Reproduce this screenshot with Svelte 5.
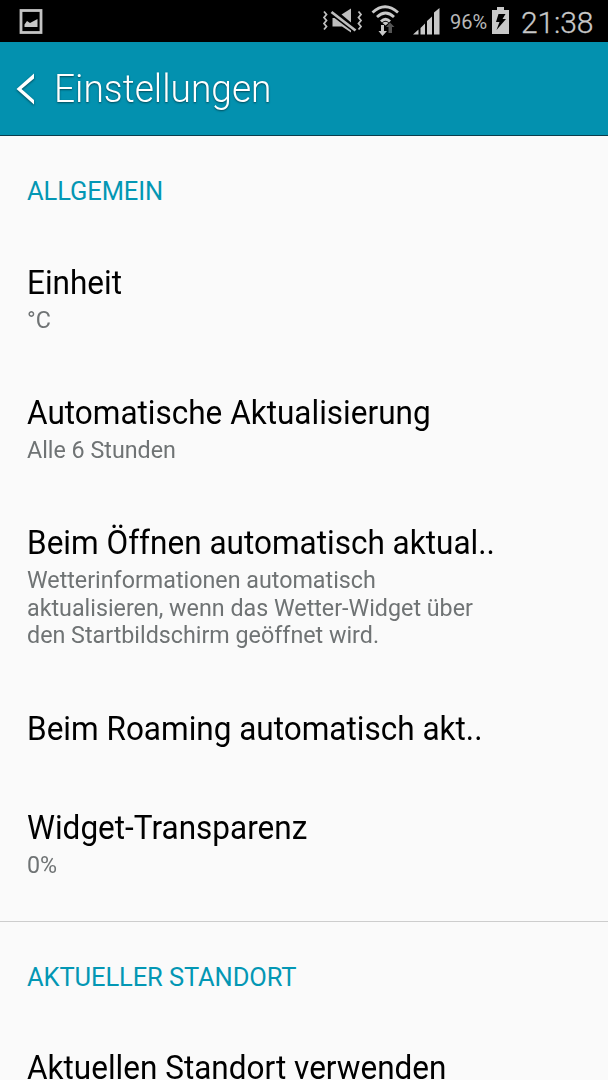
<script>
const general = [
	{ title: 'Einheit', lines: ['°C'] },
	{ title: 'Automatische Aktualisierung', lines: ['Alle 6 Stunden'] },
	{
		title: 'Beim Öffnen automatisch aktual..',
		lines: [
			'Wetterinformationen automatisch',
			'aktualisieren, wenn das Wetter-Widget über',
			'den Startbildschirm geöffnet wird.'
		]
	},
	{ title: 'Beim Roaming automatisch akt..', lines: [] },
	{ title: 'Widget-Transparenz', lines: ['0%'] }
];

const location = [
	{ title: 'Aktuellen Standort verwenden', lines: [] }
];
</script>

{#snippet list(items)}
	{#each items as item}
		<div class="item">
			<div class="title">{item.title}</div>
			{#if item.lines.length}
				<div class="summary">
					{#each item.lines as line}
						<div>{line}</div>
					{/each}
				</div>
			{/if}
		</div>
	{/each}
{/snippet}

<div class="screen">
	<div class="status-bar">
		<svg class="picture" width="24" height="26" viewBox="0 0 24 26">
			<rect x="2" y="1.500" width="20" height="22" fill="none" stroke="#c4c4c4" stroke-width="2.800" />
			<path d="M5.500 18V15.500L8 12L11 14L18.500 10V18Z" fill="#c8c8c8" />
		</svg>

		<svg class="mute" width="42" height="30" viewBox="0 0 42 30">
			<path d="M19.500 6.500L29 .5V14.500Z" fill="#bebebe" />
			<path d="M10.500 10H12.500L29 22.500V24.500L20 18.500H10.500Z" fill="#bebebe" />
			<path d="M9.500 4L33.500 22.500" stroke="#bebebe" stroke-width="2.800" />
			<path d="M2 3.500L4.500 6.500L2 9.500L4.500 12.500L2 15.500L4.500 18.500L2 21.500M36.500 3.500L39 6.500L36.500 9.500L39 12.500L36.500 15.500L39 18.500L36.500 21.500" fill="none" stroke="#bebebe" stroke-width="1.800" />
		</svg>

		<svg class="wifi" width="30" height="32" viewBox="0 0 30 32">
			<g fill="none" stroke="#c8c8c8" stroke-width="2.800">
				<path d="M1.500 7.500Q14 -4 27 7.500" />
				<path d="M6 12Q14.500 4 23 12" />
				<path d="M10 16.500Q14.500 12 19 16.500" />
			</g>
			<path d="M11.500 18Q14.500 15.500 17.500 18L14.500 20.500Z" fill="#c8c8c8" />
			<path d="M10 20H13V26H16L11.500 31L7.500 26H10Z" fill="#c8c8c8" />
			<path d="M17.500 28V22H15L19 17.500L23.500 22H21V28Z" fill="#555" />
		</svg>

		<svg class="signal" width="28" height="28" viewBox="0 0 28 28">
			<path d="M0 26.500L5.500 21.500V26.500ZM7.500 26.500V20L12 15.500V26.500ZM14 26.500V13L19 8.500V26.500ZM21 26.500V4.500L26.500 0V26.500Z" fill="#c8c8c8" />
		</svg>

		<span class="percent">96%</span>

		<svg class="battery" width="18" height="28" viewBox="0 0 18 28">
			<path d="M5 0H12V3H17V27H0V3H5Z" fill="#c8c8c8" />
			<path d="M6.500 7H13.500L10.500 12H14L4.500 23L7.500 15H4Z" fill="#000" />
		</svg>

		<span class="clock">21:38</span>
	</div>

	<header>
		<svg width="22" height="36" viewBox="0 0 22 36">
			<path d="M18 2.500V7.500L5.500 18L18 29V33.500L.5 18Z" fill="#fff" />
		</svg>
		<h1>Einstellungen</h1>
	</header>

	<section>
		<h2>ALLGEMEIN</h2>
		{@render list(general)}
	</section>
	<section>
		<h2>AKTUELLER STANDORT</h2>
		{@render list(location)}
	</section>
</div>

<style>
:global(body) {
	background-color: #fafafa;
}

.screen {
	background-color: #fafafa;
	box-sizing: border-box;
	font-family: Roboto, sans-serif;
	height: 1080px;
	overflow: hidden;
	width: 608px;
}

.status-bar {
	align-items: flex-start;
	background-color: #000;
	box-sizing: border-box;
	color: #c8c8c8;
	display: flex;
	height: 42px;
	padding-left: 19px;
}

.status-bar svg {
	flex: none;
}

.picture {
	margin-top: 9px;
}

.mute {
	margin: 8px 0 0 279px;
}

.wifi {
	margin: 5px 0 0 7px;
}

.signal {
	margin: 8px 0 0 12px;
}

.percent {
	color: #b8b8b8;
	font-size: 20px;
	line-height: 24px;
	margin: 10px 0 0 9px;
	width: 42px;
}

.battery {
	margin-top: 7px;
}

.clock {
	font-size: 30px;
	font-weight: 300;
	letter-spacing: -0.1px;
	line-height: 34px;
	margin: 6px 0 0 11px;
	-webkit-text-stroke: 0.3px #c8c8c8;
}

header {
	align-items: center;
	background-color: #0391af;
	border-bottom: 1px solid #0b3d4c;
	box-sizing: border-box;
	display: flex;
	height: 94px;
	padding-left: 16px;
}

header svg {
	filter: drop-shadow(0 1px 1px rgba(0, 0, 0, 0.5));
}

/* The headings and rows use slightly condensed lettering */
h1,
.title,
.summary {
	transform-origin: left;
	white-space: nowrap;
}

h1 {
	color: #fff;
	font-size: 38px;
	font-weight: 300;
	line-height: 44px;
	margin: 0 0 0 16px;
	text-shadow: 0 1px 2px rgba(0, 0, 0, 0.5);
	transform: scaleX(0.977);
}

section {
	padding: 38px 27px 14.5px;
}

section + section {
	border-top: 1px solid #cdcdcd;
}

h2 {
	color: #0397b4;
	font-size: 25.5px;
	font-weight: 400;
	letter-spacing: -0.1px;
	line-height: 34px;
	margin: 0 0 22.6px;
}

.item {
	padding: 32px 0 27.5px;
}

.title {
	color: #000;
	font-size: 33px;
	line-height: 40px;
	transform: scaleX(0.955);
}

.summary {
	color: #6f7374;
	font-size: 24.5px;
	line-height: 27.7px;
	margin-top: 3px;
	transform: scaleX(0.95);
}
</style>
